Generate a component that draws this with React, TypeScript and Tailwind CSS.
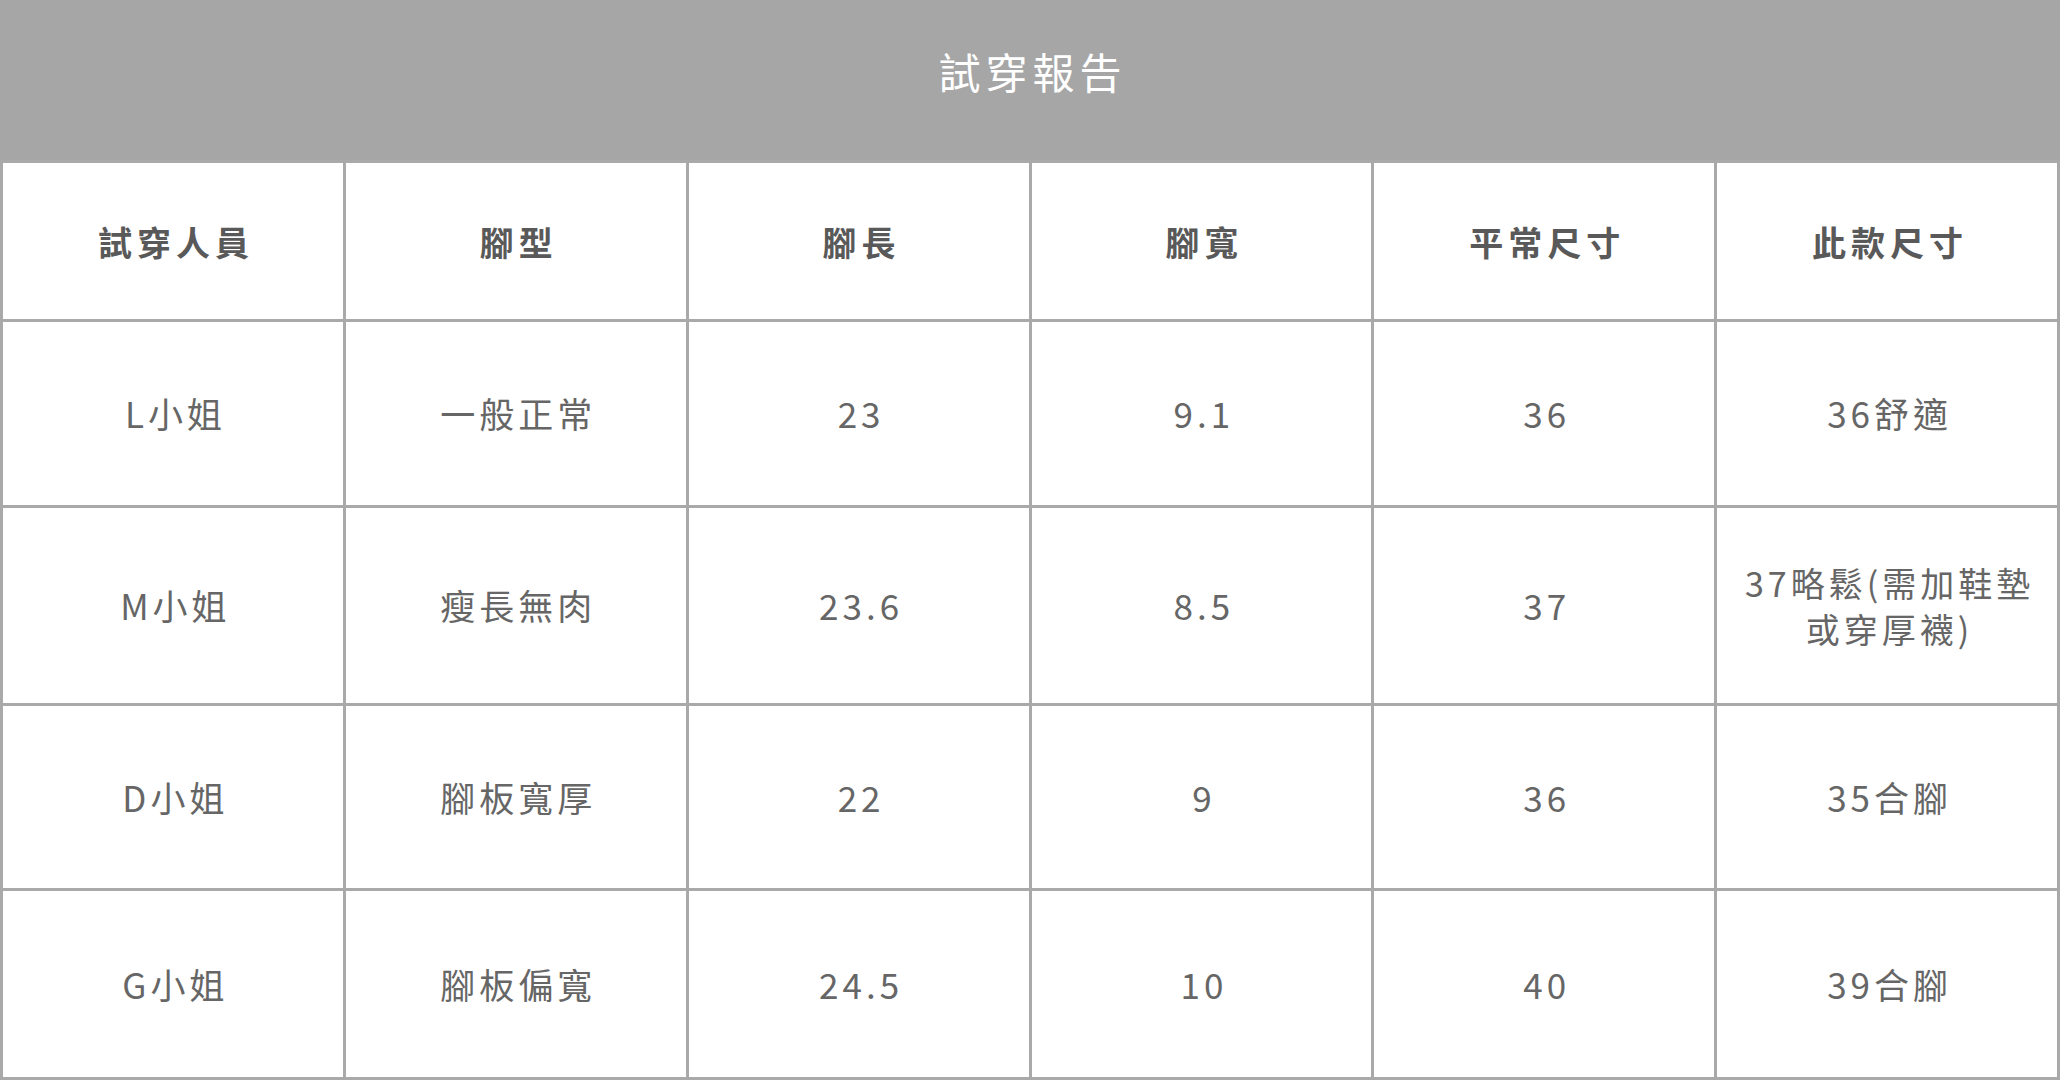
const headers = ['試穿人員', '腳型', '腳長', '腳寬', '平常尺寸', '此款尺寸']

const rows = [
  { h: 'h-[183px]', cells: ['L小姐', '一般正常', '23', '9.1', '36', '36舒適'] },
  { h: 'h-[195px]', cells: ['M小姐', '瘦長無肉', '23.6', '8.5', '37', 'WRAP'] },
  { h: 'h-[182px]', cells: ['D小姐', '腳板寬厚', '22', '9', '36', '35合腳'] },
  { h: 'h-[186px]', cells: ['G小姐', '腳板偏寬', '24.5', '10', '40', '39合腳'] },
]

function App() {
  return (
    <div className="w-[2060px] font-['Noto_Sans_CJK_TC','Noto_Sans',sans-serif]">
      <div className="h-[160px] bg-[#a6a6a6] flex items-center justify-center pb-[20px] pl-[5px]">
        <h1 className="text-white text-[42px] tracking-[5px] font-normal">試穿報告</h1>
      </div>

      <div className="grid grid-cols-6 gap-[3px] p-[3px] bg-[#a9a9a9]">
        {headers.map((t) => (
          <div key={t} className="h-[156px] bg-white flex items-center justify-center pl-[6px]">
            <p className="text-[34px] font-bold tracking-[5px] text-[#595959]">{t}</p>
          </div>
        ))}

        {rows.map((r) =>
          r.cells.map((c, i) => (
            <div key={r.cells[0] + i} className={`${r.h} bg-white flex items-center justify-center text-center pl-[5px]`}>
              {c === 'WRAP' ? (
                <p className="text-[34px] leading-[46px] tracking-[4px] text-[#666666]">
                  37略鬆(需加鞋墊
                  <br />
                  或穿厚襪)
                </p>
              ) : (
                <p className="text-[35px] tracking-[4px] text-[#666666]">{c}</p>
              )}
            </div>
          ))
        )}
      </div>
    </div>
  )
}

export default App
